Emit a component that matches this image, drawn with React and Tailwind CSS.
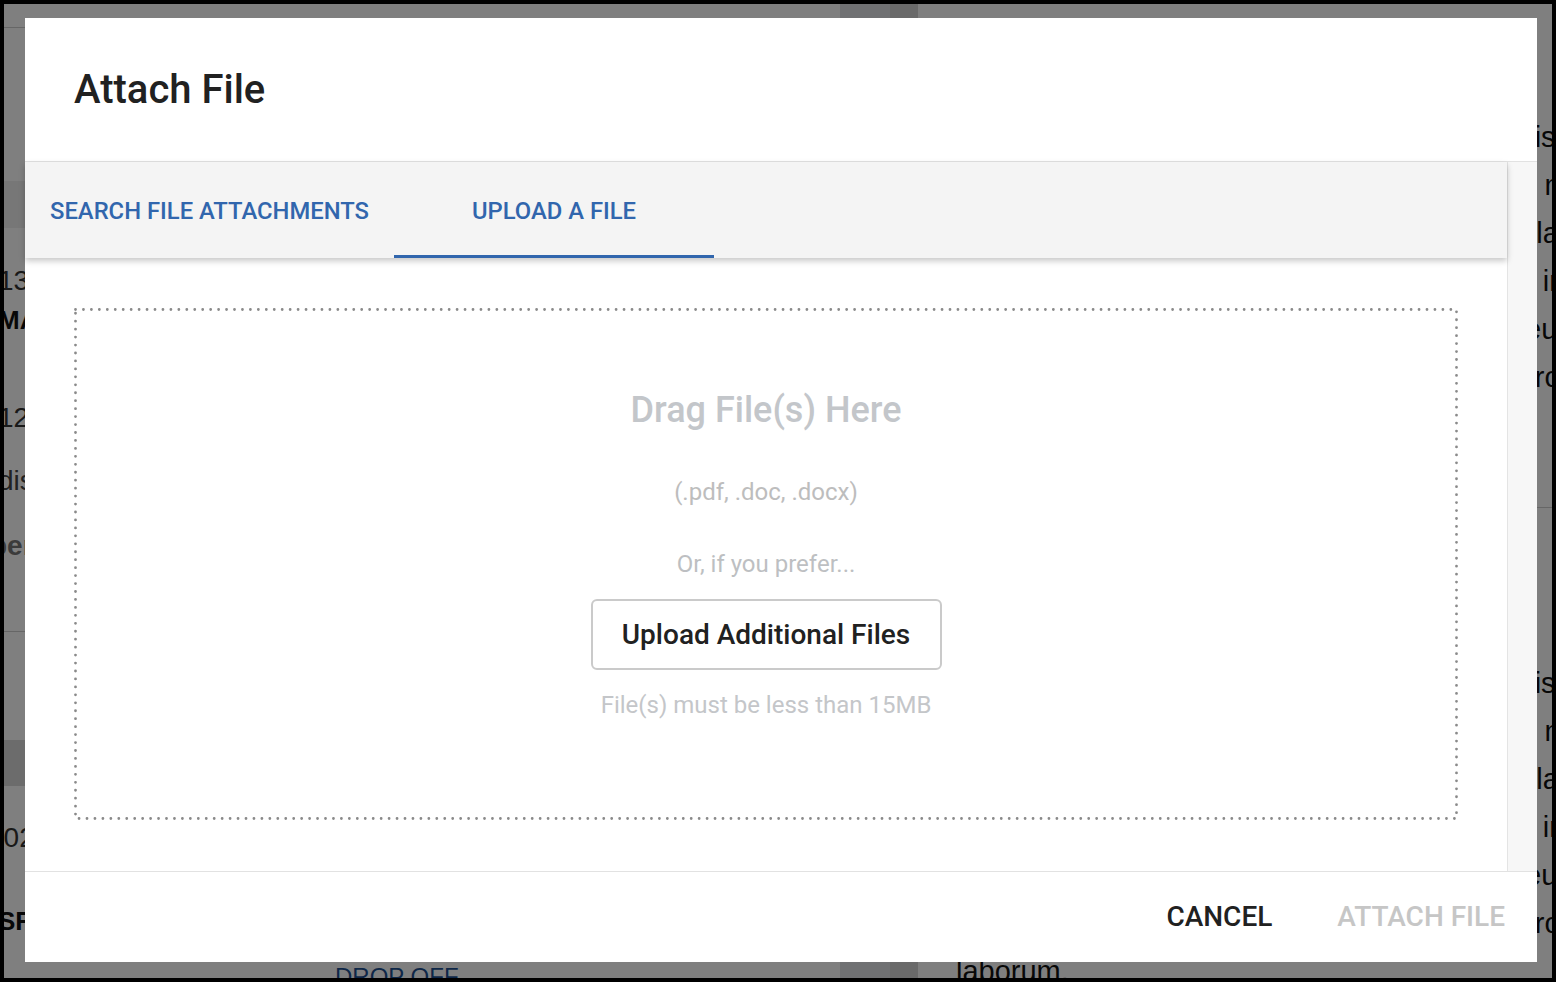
const LINES_A = [
  'Lorem ipsum dolor sit amet, consectetur adipiscing elit, sed do',
  'eiusmod tempor incididunt ut labore et dolore magna aliqua. Ut enim',
  'ad minim veniam, quis nostrud exercitation ullamco laboris nisi ut',
  'aliquip ex ea commodo consequat. Duis aute irure dolor in repre',
  'henderit in voluptate velit esse cillum dolore eu fugiat nulla pari',
  'atur. Excepteur sint occaecat cupidatat non proident, sunt in culpa',
];
const LINES_B = [
  'Lorem ipsum dolor sit amet, consectetur adipiscing elit, sed do',
  'eiusmod tempor incididunt ut labore et dolore magna aliqua. Ut enim',
  'ad minim veniam, quis nostrud exercitation ullamco laboris nisi ut',
  'aliquip ex ea commodo consequat. Duis aute irure dolor in repre',
  'henderit in voluptate velit esse cillum dolore eu fugiat nulla pari',
  'atur. Excepteur sint occaecat cupidatat non proident, sunt in culpa',
  'laborum.',
];

function BackgroundPage() {
  return (
    <div className="flex h-full w-full bg-white font-['Liberation_Sans',Arial,sans-serif] text-[#222]">
      {/* left list */}
      <div className="flex w-[836px] shrink-0 flex-col">
        <div className="h-[24px] shrink-0 border-b border-[#ccc]" />
        <div className="h-[153px] shrink-0" />
        <div className="h-[47px] shrink-0 bg-[#eeeeee]" />
        <div className="flex h-[404px] shrink-0 flex-col border-b border-[#ccc] pt-[36px]">
          <div className="-ml-[6px] text-[28px] leading-[34px] text-[#333]">1331 Main Street</div>
          <div className="-ml-[6px] mt-[5px] text-[26px] font-bold leading-[34px] text-[#111]">MAIN OFFICE</div>
          <div className="-ml-[6px] mt-[64px] text-[28px] leading-[34px] text-[#333]">12:30 PM</div>
          <div className="-ml-[6px] mt-[29px] text-[28px] leading-[34px] text-[#444]">dispatched</div>
          <div className="-ml-[14px] mt-[31px] text-[28px] font-bold leading-[34px] text-[#777]">pending</div>
        </div>
        <div className="h-[108px] shrink-0" />
        <div className="h-[46px] shrink-0 bg-[#d8d8d8]" />
        <div className="flex shrink-0 flex-col pt-[35px]">
          <div className="-ml-[16px] text-[28px] leading-[34px] text-[#333]">1023 Pine Street</div>
          <div className="-ml-[6px] mt-[49px] text-[26px] font-bold leading-[34px] text-[#111]">SF DEPOT</div>
          <div className="ml-[331px] mt-[24px] text-[24px] leading-[30px] text-[#1d4f91]">DROP OFF</div>
        </div>
      </div>
      {/* divider strip */}
      <div className="flex w-[78px] shrink-0">
        <div className="w-[50px] bg-[#e0e3e7]" />
        <div className="w-[28px] bg-[#d4d4d4]" />
      </div>
      {/* right text */}
      <div className="flex min-w-0 flex-1 flex-col overflow-hidden pl-[38px]">
        <div className="mt-[109px] flex shrink-0 flex-col">
          {LINES_A.map((l, i) => (
            <div key={i} className="whitespace-nowrap text-[29px] leading-[48px] text-[#111]">{l}</div>
          ))}
        </div>
        <div className="mt-[106px] h-px w-full shrink-0 bg-[#ccc]" />
        <div className="mt-[151px] flex shrink-0 flex-col">
          {LINES_B.map((l, i) => (
            <div key={i} className="whitespace-nowrap text-[29px] leading-[48px] text-[#111]">{l}</div>
          ))}
        </div>
      </div>
    </div>
  );
}

function DottedBox({ children }) {
  return (
    <div className="relative flex h-[512px] w-full flex-col items-center">
      <svg className="pointer-events-none absolute inset-0 h-full w-full" viewBox="0 0 1384 512" preserveAspectRatio="none">
        <rect
          x="1.5"
          y="1.5"
          width="1381"
          height="509"
          fill="none"
          stroke="#8a8a8a"
          strokeWidth="2.8"
          strokeLinecap="round"
          strokeDasharray="0 7.95"
        />
      </svg>
      {children}
    </div>
  );
}

export default function App() {
  return (
    <div className="h-screen w-screen overflow-hidden bg-black p-[4px]">
      <div className="relative h-full w-full overflow-hidden">
        <BackgroundPage />
        <div className="absolute inset-0 bg-black/50" />

        {/* modal */}
        <div className="absolute left-[21px] top-[14px] flex h-[944px] w-[1512px] flex-col bg-white font-['Roboto','Liberation_Sans',sans-serif]">
          <div className="flex h-[144px] shrink-0 items-center border-b border-[#e2e2e2] pl-[49px]">
            <h1 className="text-[40px] font-medium leading-none text-[#212121]">Attach File</h1>
          </div>

          <div className="flex min-h-0 flex-1">
            <div className="flex min-w-0 flex-1 flex-col">
              <div className="relative z-10 flex h-[96px] shrink-0 bg-[#f4f4f4] shadow-[0_3px_6px_rgba(0,0,0,0.22)]">
                <button className="flex w-[369px] items-center justify-center pt-[3px] text-[23.8px] font-medium text-[#3166ad]">
                  SEARCH FILE ATTACHMENTS
                </button>
                <button className="relative flex w-[320px] items-center justify-center pt-[3px] text-[23.8px] font-medium text-[#3166ad]">
                  UPLOAD A FILE
                  <span className="absolute bottom-0 left-0 h-[3px] w-full bg-[#3166ad]" />
                </button>
              </div>

              <div className="flex flex-1 flex-col px-[49px] pt-[50px]">
                <DottedBox>
                  <div className="mt-[80px] text-[36px] font-medium leading-[44px] text-[#c3c6ca]">Drag File(s) Here</div>
                  <div className="mt-[45px] text-[24px] leading-[30px] text-[#bdbdbd]">(.pdf, .doc, .docx)</div>
                  <div className="mt-[42px] text-[24px] leading-[30px] text-[#bdbfc2]">Or, if you prefer...</div>
                  <button className="mt-[20px] flex h-[71px] w-[351px] items-center justify-center rounded-[6px] border-2 border-[#cacaca] bg-white text-[28px] font-medium text-[#212121]">
                    Upload Additional Files
                  </button>
                  <div className="mt-[20px] text-[24px] leading-[30px] text-[#c4c6c9]">File(s) must be less than 15MB</div>
                </DottedBox>
              </div>
            </div>
            <div className="w-[30px] shrink-0 border-l border-[#e4e4e4] bg-[#f7f7f7]" />
          </div>

          <div className="flex h-[91px] shrink-0 items-center justify-end gap-[65px] border-t border-[#e2e2e2] pr-[32px]">
            <button className="text-[28px] font-medium leading-none text-[#212121]">CANCEL</button>
            <button className="text-[28px] font-medium leading-none text-[#c6c6c6]">ATTACH FILE</button>
          </div>
        </div>
      </div>
    </div>
  );
}
